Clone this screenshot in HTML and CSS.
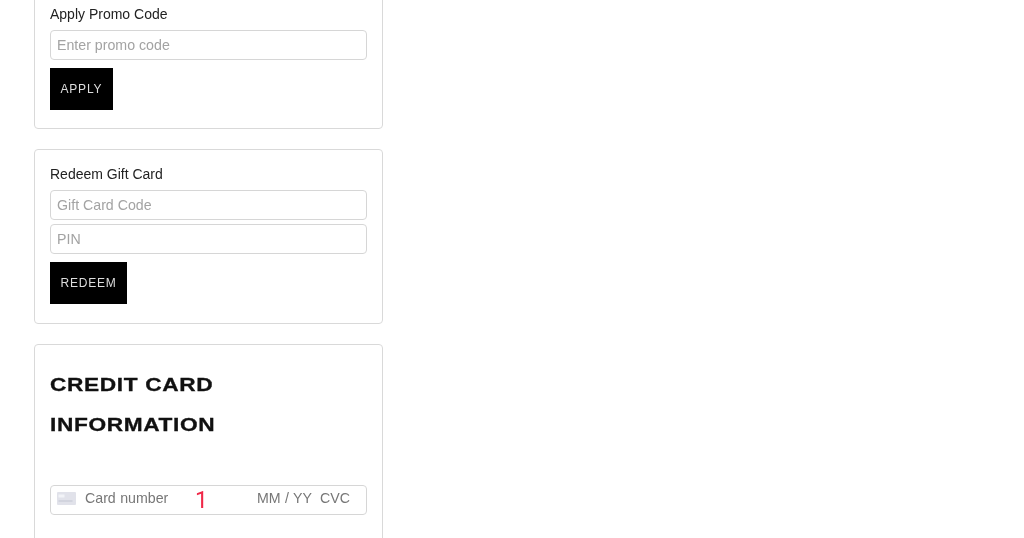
FILE: index.html
```html
<!DOCTYPE html>
<html lang="en">
<head>
    <meta charset="UTF-8">
    <title>Checkout</title>
    <link rel="stylesheet" href="styles.css">
</head>
<body>
    <div class="column">
        <form class="card">
            <label class="label" for="promo">Apply Promo Code</label>
            <input class="input" type="text" id="promo" placeholder="Enter promo code">
            <button class="btn" type="button">APPLY</button>
        </form>

        <form class="card card-gift">
            <label class="label" for="gift">Redeem Gift Card</label>
            <input class="input" type="text" id="gift" placeholder="Gift Card Code">
            <input class="input" type="text" placeholder="PIN">
            <button class="btn" type="button">REDEEM</button>
        </form>

        <form class="card card-payment">
            <h2 class="title">CREDIT CARD<br>INFORMATION</h2>
            <div class="card-field">
                <svg class="card-icon" width="19" height="13" viewBox="0 0 19 13">
                    <rect width="19" height="13" rx="1" fill="#e1e2ea"/>
                    <rect x="1.5" y="2.5" width="6" height="3" fill="#f2f3f7"/>
                    <rect x="1.5" y="8.5" width="14" height="1" fill="#c3c6d2"/>
                </svg>
                <span class="card-number">Card number</span>
                <span class="card-date">MM / YY</span>
                <span class="card-cvc">CVC</span>
                <span class="marker">1</span>
            </div>
        </form>
    </div>
</body>
</html>
```

FILE: styles.css
```css
html, body {
    height: 100%;
}

body {
    margin: 0;
    background: #fff;
    color: #222;
    font-family: 'Liberation Sans', Arial, sans-serif;
    overflow: hidden;
}

.column {
    width: 349px;
    height: 560px;
    margin: -11px 0 0 34px;
    display: flex;
    flex-direction: column;
    gap: 20px;
    overflow: hidden;
    filter: blur(0.5px);
}

.card {
    display: flex;
    flex-direction: column;
    align-items: flex-start;
    gap: 4px;
    padding: 16px 15px 18px;
    border: 1px solid #d9d9d9;
    border-radius: 4px;
    box-sizing: border-box;
}

.card-gift {
    padding-bottom: 19px;
}

.label {
    font-size: 14px;
    line-height: 17px;
    margin: 0 0 3px;
    color: #222;
}

.input {
    width: 100%;
    height: 30px;
    box-sizing: border-box;
    padding: 0 6px;
    border: 1px solid #d6d6d6;
    border-radius: 4px;
    font-family: inherit;
    font-size: 14.2px;
    outline: none;
}

.input::placeholder {
    color: #a3a3a3;
}

.btn {
    height: 42px;
    margin-top: 4px;
    padding: 0 10.5px;
    border: none;
    background: #000;
    color: #ddd;
    font-family: inherit;
    font-size: 12px;
    letter-spacing: 0.8px;
    filter: blur(0.2px);
}

.card-payment {
    height: 260px;
    flex: none;
    gap: 0;
    padding-top: 20px;
}

.title {
    margin: 0 0 40px;
    font-size: 18px;
    line-height: 40px;
    color: #111;
    letter-spacing: 0.5px;
    transform: scaleX(1.26);
    transform-origin: left;
    white-space: nowrap;
    -webkit-text-stroke: 0.3px #111;
}

.card-field {
    position: relative;
    width: 100%;
    height: 30px;
    box-sizing: border-box;
    display: flex;
    align-items: center;
    padding: 0 16px 4px 6px;
    border: 1px solid #d6d6d6;
    border-radius: 4px;
    font-size: 14.2px;
    color: #777;
    word-spacing: 0.5px;
}

.card-icon {
    flex: none;
    margin-right: 9px;
}

.card-number {
    flex: 1;
}

.card-date {
    margin-right: 8px;
}

.marker {
    position: absolute;
    left: 144px;
    top: 1px;
    font-family: Roboto, sans-serif;
    font-weight: 400;
    font-size: 23px;
    line-height: 28px;
    color: #f02848;
}
```
